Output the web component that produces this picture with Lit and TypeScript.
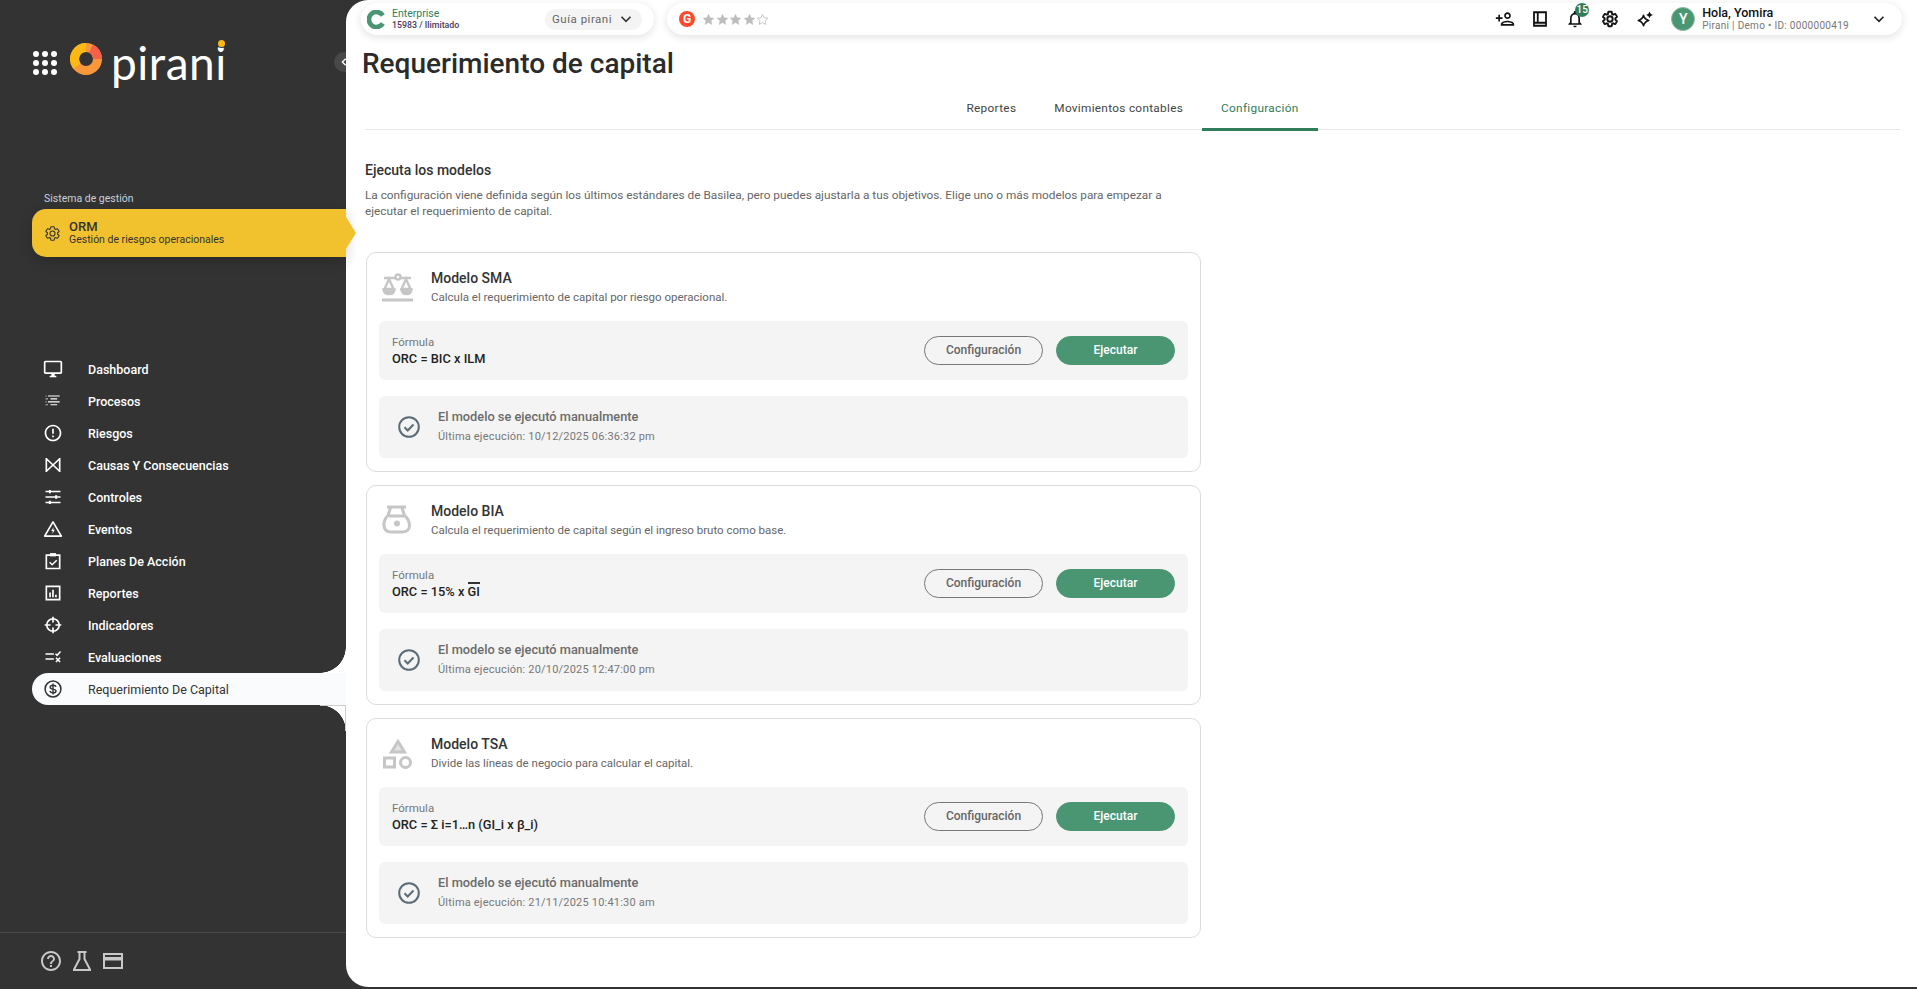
import { LitElement, css, html, svg } from "lit";
import { customElement } from "lit/decorators.js";

const navIcons: Record<string, unknown> = {
  monitor: svg`<path fill="currentColor" d="M21 2H3c-1.1 0-2 .9-2 2v12c0 1.1.9 2 2 2h7v2H8v2h8v-2h-2v-2h7c1.1 0 2-.9 2-2V4c0-1.1-.9-2-2-2zm0 14H3V4h18v12z"/>`,
  process: svg`<path fill="none" stroke="currentColor" stroke-width="1.4" d="M6 6h14M9 9.5h8M6 13h14M9 16.5h8"/><path fill="none" stroke="currentColor" stroke-width="1.4" d="M3 6h1.5M3 9.5h3M3 13h1.5M3 16.5h3" opacity=".6"/>`,
  alert: svg`<path fill="currentColor" d="M11 15h2v2h-2zm0-8h2v6h-2zm.99-5C6.47 2 2 6.48 2 12s4.47 10 9.99 10C17.52 22 22 17.52 22 12S17.52 2 11.99 2zM12 20c-4.42 0-8-3.58-8-8s3.58-8 8-8 8 3.58 8 8-3.58 8-8 8z"/>`,
  bowtie: svg`<path fill="none" stroke="currentColor" stroke-width="2" d="M4 3.5v17M20 3.5v17M4 4.5 20 19.5M20 4.5 4 19.5"/>`,
  tune: svg`<path fill="none" stroke="currentColor" stroke-width="1.8" d="M3 5.5h18M3 12h18M3 18.500h18"/><path fill="currentColor" d="M7 3.500h2.500v4H7zM14.500 10h2.500v4h-2.500zM7 16.500h2.500v4H7z"/>`,
  event: svg`<path fill="none" stroke="currentColor" stroke-width="2" stroke-linejoin="round" d="M12 3.500 22 20.500H2z"/><path fill="currentColor" d="M12.800 9.500 9.800 14.500h2l-.6 3.500 3-5h-2z"/>`,
  plan: svg`<path fill="none" stroke="currentColor" stroke-width="2" d="M4 5h16v16H4z"/><path fill="currentColor" d="M8.500 2.500h7v4h-7z"/><path fill="none" stroke="currentColor" stroke-width="1.800" d="m8 13.500 3 3 5.500-5.500"/>`,
  report: svg`<path fill="none" stroke="currentColor" stroke-width="2" d="M4 4h16v16H4z"/><path fill="currentColor" d="M7.500 11.500h2V17h-2zM11 8h2v9h-2zM14.500 14h2v3h-2z"/>`,
  target: svg`<circle cx="12" cy="12" r="7.500" fill="none" stroke="currentColor" stroke-width="2"/><path fill="none" stroke="currentColor" stroke-width="2" d="M12 2v7M12 15v7M2 12h7M15 12h7"/>`,
  evaluate: svg`<path fill="none" stroke="currentColor" stroke-width="1.800" d="M3 8.500h10M3 14.500h10M15 8l2 2 4-4.500M15.500 13l5 5M20.500 13l-5 5"/>`,
  dollar: svg`<circle cx="12" cy="12" r="9.500" fill="none" stroke="currentColor" stroke-width="1.800"/><path fill="none" stroke="currentColor" stroke-width="1.700" d="M15.500 9.500c-.3-1.400-1.700-2-3.500-2-1.900 0-3.400.9-3.400 2.300 0 3.300 7 1.500 7 4.600 0 1.400-1.500 2.200-3.600 2.200-1.900 0-3.400-.8-3.700-2.300M12 5.500v13"/>`,
};

const navItems = [
  { label: "Dashboard", icon: "monitor" },
  { label: "Procesos", icon: "process" },
  { label: "Riesgos", icon: "alert" },
  { label: "Causas Y Consecuencias", icon: "bowtie" },
  { label: "Controles", icon: "tune" },
  { label: "Eventos", icon: "event" },
  { label: "Planes De Acción", icon: "plan" },
  { label: "Reportes", icon: "report" },
  { label: "Indicadores", icon: "target" },
  { label: "Evaluaciones", icon: "evaluate" },
  { label: "Requerimiento De Capital", icon: "dollar", active: true },
];

const modelIcons: Record<string, unknown> = {
  scale: svg`<g fill="none" stroke="#c6c6c6" stroke-width="2.400"><path d="M3 7h12M19 7h11"/><circle cx="17" cy="6" r="2.500"/><path d="M8 8 3.500 18h9zM25 8l-4.500 10h9z"/><path d="M2.500 18.500c.5 3.500 2.500 4.500 5.500 4.500s5-1 5.500-4.500zM20.500 18.500c.5 3.500 2.500 4.500 5 4.500s4.500-1 5-4.500z" fill="#c6c6c6"/></g><path d="M1 27.500h31v3H1z" fill="#c6c6c6"/>`,
  bag: svg`<g fill="none" stroke="#c6c6c6" stroke-width="3"><path d="M6 3h19M9.500 4 7 11.500C3.500 15 2.500 18 3 22c.5 4 3.500 6 7 6h11c4.500 0 7.500-2.500 7.500-6.500 0-4-1.500-7-5-10L21 4M8 12h15"/></g><circle cx="16" cy="19.500" r="3" fill="#c6c6c6"/>`,
  shapes: svg`<g fill="none" stroke="#c6c6c6" stroke-width="3"><path d="M17 4.500 23.500 15h-13z" fill="#c6c6c6" fill-opacity=".5"/><path d="M3.500 21h10v9h-10z"/><circle cx="24.500" cy="25.500" r="5"/></g>`,
};

const models = [
  {
    name: "Modelo SMA",
    icon: "scale",
    desc: "Calcula el requerimiento de capital por riesgo operacional.",
    formula: html`ORC = BIC x ILM`,
    last: "Última ejecución: 10/12/2025 06:36:32 pm",
  },
  {
    name: "Modelo BIA",
    icon: "bag",
    desc: "Calcula el requerimiento de capital según el ingreso bruto como base.",
    formula: html`ORC = 15% x <span class="over">GI</span>`,
    last: "Última ejecución: 20/10/2025 12:47:00 pm",
  },
  {
    name: "Modelo TSA",
    icon: "shapes",
    desc: "Divide las líneas de negocio para calcular el capital.",
    formula: html`ORC = Σ i=1…n (GI_i x β_i)`,
    last: "Última ejecución: 21/11/2025 10:41:30 am",
  },
];

const chevron = html`<svg viewBox="0 0 24 24" width="18" height="18"><path fill="none" stroke="currentColor" stroke-width="2.200" d="m6 9 6 6 6-6"/></svg>`;
const star = (filled: boolean) =>
  html`<svg viewBox="0 0 24 24" width="13" height="13"><path fill=${filled ? "#bdbdbd" : "none"} stroke="#bdbdbd" stroke-width=${filled ? 1 : 1.5} d="m12 2.500 2.900 6.300 6.900.8-5.100 4.700 1.400 6.800-6.100-3.400-6.100 3.400 1.400-6.800L2.200 9.600l6.900-.8z"/></svg>`;

@customElement("app-root")
export class AppRoot extends LitElement {
  static styles = css`
    :host {
      display: flex;
      width: 1917px;
      height: 989px;
      overflow: hidden;
      background: #333333;
      font-family: Roboto, "Liberation Sans", sans-serif;
      color: #333;
    }

    /* sidebar */
    .side {
      width: 346px;
      flex: none;
      position: relative;
      z-index: 2;
      display: flex;
      flex-direction: column;
      color: #fff;
    }
    .logo {
      height: 189px;
      padding: 40px 0 0 33px;
      box-sizing: border-box;
      display: flex;
      align-items: flex-start;
    }
    .dots {
      display: grid;
      grid-template-columns: repeat(3, 6px);
      gap: 3px;
      margin-top: 11px;
    }
    .dots i {
      width: 6px;
      height: 6px;
      border-radius: 50%;
      background: #fff;
    }
    .ring {
      margin: 2px 0 0 12px;
    }
    .word {
      position: relative;
      margin-left: 8px;
      font-family: Lato, sans-serif;
      font-size: 46px;
      line-height: 46px;
      letter-spacing: 0.5px;
      font-weight: 400;
      color: #fff;
    }
    .word::after {
      content: "";
      position: absolute;
      right: 2px;
      top: 0;
      width: 7px;
      height: 7px;
      border-radius: 50%;
      background: #fdb913;
      box-shadow: 0 0 0 1px #333;
    }
    .sys {
      font-size: 10.5px;
      line-height: 20px;
      padding-left: 44px;
      color: #c9d1d9;
    }
    .orm {
      position: relative;
      margin-left: 32px;
      height: 48px;
      background: #f2c12e;
      border-radius: 14px 0 0 14px;
      display: flex;
      align-items: center;
      color: #333;
      box-shadow: 0 4px 14px rgba(0, 0, 0, 0.2);
    }
    .orm::after {
      content: "";
      position: absolute;
      right: -10px;
      top: 8px;
      width: 10px;
      height: 32px;
      background: #f2c12e;
      clip-path: polygon(0 0, 100% 50%, 0 100%);
    }
    .orm svg {
      margin: 0 8px 0 12px;
    }
    .orm b {
      display: block;
      font-size: 13px;
      font-weight: 500;
      line-height: 14px;
    }
    .orm span {
      display: block;
      font-size: 10.5px;
      line-height: 12px;
    }
    .nav {
      margin-top: 96px;
    }
    .row {
      position: relative;
      height: 32px;
      margin-left: 32px;
      display: flex;
      align-items: center;
      font-size: 12.500px;
      font-weight: 500;
    }
    .row svg {
      width: 20px;
      height: 20px;
      margin: 0 25px 0 11px;
      flex: none;
    }
    .row.active {
      background: #fafbfd;
      color: #333;
      font-weight: 400;
      border-radius: 16px 0 0 16px;
    }
    .row.active::before,
    .row.active::after {
      content: "";
      position: absolute;
      right: 0;
      width: 26px;
      height: 26px;
      box-sizing: border-box;
    }
    .row.active::before {
      top: -26px;
      background: radial-gradient(circle at 0 0, #333 25.500px, #fff 26px);
    }
    .row.active::after {
      bottom: -26px;
      background: radial-gradient(circle at 0 100%, #333 25.500px, #fff 26px);
      border-top: 1px solid #ccc;
      border-right: 1px solid #ccc;
    }
    .foot {
      margin-top: auto;
      height: 56px;
      border-top: 1px solid #4a4a4a;
      display: flex;
      align-items: center;
      gap: 7px;
      padding: 0 0 0 39px;
      color: #c8c8c8;
    }
    .toggle {
      position: absolute;
      top: 52px;
      right: 0;
      width: 12px;
      height: 20px;
      background: #484848;
      border-radius: 10px 0 0 10px;
    }
    .toggle svg {
      position: absolute;
      left: 6px;
      top: 3px;
      color: #fff;
    }

    /* main */
    .main {
      flex: 1;
      min-width: 0;
      height: 987px;
      background: #fff;
      border-radius: 22px 0 0 22px;
      display: flex;
      flex-direction: column;
      color: #333;
    }
    .top {
      display: flex;
      gap: 13px;
      padding: 3px 15px 0;
      height: 32px;
    }
    .pill {
      background: #fff;
      border-radius: 16px;
      height: 32px;
      box-shadow: 0 2px 8px rgba(0, 0, 0, 0.12);
      display: flex;
      align-items: center;
    }
    .plan {
      width: 293px;
      flex: none;
      padding-left: 6px;
      box-sizing: border-box;
    }
    .plan-text {
      margin-left: 6px;
    }
    .plan-text b {
      display: block;
      font-weight: 400;
      font-size: 10.500px;
      line-height: 12px;
      color: #2f7d5b;
    }
    .plan-text span {
      display: block;
      font-weight: 500;
      font-size: 8.800px;
      line-height: 10px;
      color: #4a3a5c;
    }
    .guide {
      margin-left: auto;
      margin-right: 12px;
      width: 97px;
      height: 21px;
      box-sizing: border-box;
      background: #f4f4f4;
      border-radius: 11px;
      display: flex;
      align-items: center;
      justify-content: space-between;
      padding: 0 7px 0 7px;
      font-size: 11.500px;
      letter-spacing: 0.5px;
      color: #666;
    }
    .guide svg {
      color: #333;
    }
    .bar {
      flex: 1;
      padding-left: 12px;
    }
    .g2 {
      width: 16px;
      height: 16px;
      border-radius: 50%;
      background: #ff492c;
      color: #fff;
      font-size: 12px;
      font-weight: 700;
      line-height: 16px;
      text-align: center;
      margin-right: 7px;
    }
    .stars {
      display: flex;
      gap: 0.500px;
    }
    .tools {
      margin-left: auto;
      display: flex;
      align-items: center;
      color: #111;
    }
    .tool {
      position: relative;
      width: 35px;
      display: flex;
      justify-content: center;
    }
    .badge {
      position: absolute;
      left: 18px;
      top: -6px;
      width: 14px;
      height: 14px;
      border-radius: 50%;
      background: #2f7d5b;
      color: #fff;
      font-size: 10px;
      font-weight: 500;
      line-height: 14px;
      text-align: center;
    }
    .avatar {
      width: 24px;
      height: 24px;
      box-sizing: border-box;
      border-radius: 50%;
      background: #4a9672;
      border: 1px solid #8dbba4;
      color: #fff;
      font-size: 14px;
      font-weight: 500;
      line-height: 22px;
      text-align: center;
      margin: 0 7px 0 9px;
    }
    .user b {
      display: block;
      font-size: 12.500px;
      font-weight: 500;
      line-height: 14px;
      color: #111;
    }
    .user span {
      display: block;
      font-size: 10px;
      letter-spacing: 0.300px;
      line-height: 12px;
      color: #777;
    }
    .caret {
      margin: 0 14px 0 21px;
      display: flex;
      color: #222;
    }
    h1 {
      margin: 10px 0 0 16px;
      font-size: 28px;
      line-height: 38px;
      font-weight: 500;
      color: #2b2b2b;
    }
    .tabs {
      margin: 5px 17px 0 19px;
      height: 41px;
      display: flex;
      justify-content: center;
      border-bottom: 1px solid #e6e6e6;
    }
    .tab {
      padding: 0 19px;
      font-size: 11.800px;
      letter-spacing: 0.300px;
      line-height: 41px;
      color: #444;
    }
    .tab.on {
      color: #2f7d5b;
      height: 40px;
      border-bottom: 3px solid #2f7d5b;
    }
    .body {
      width: 835px;
      margin: 30px 0 0 20px;
    }
    h2 {
      margin: 0 0 0 -1px;
      font-size: 14px;
      line-height: 20px;
      font-weight: 500;
      color: #333;
    }
    .intro {
      margin: 7px 0 33px -1px;
      font-size: 11.800px;
      line-height: 16px;
      color: #666;
    }
    .card {
      box-sizing: border-box;
      height: 220px;
      margin-bottom: 13px;
      padding: 0 12px;
      border: 1px solid #dcdcdc;
      border-radius: 10px;
    }
    .head {
      height: 68px;
      display: flex;
      align-items: center;
    }
    .head svg {
      margin: 0 17px 0 2px;
      flex: none;
    }
    .head b {
      display: block;
      font-size: 14px;
      font-weight: 500;
      line-height: 20px;
      color: #333;
    }
    .head span {
      display: block;
      font-size: 11.500px;
      line-height: 18px;
      color: #666;
    }
    .formula,
    .status {
      background: #f4f4f4;
      border-radius: 6px;
      display: flex;
      align-items: center;
    }
    .formula {
      height: 59px;
      padding: 0 13px;
      margin-bottom: 16px;
    }
    .formula small {
      display: block;
      font-size: 11.500px;
      line-height: 15px;
      color: #777;
    }
    .formula b {
      display: block;
      font-size: 12.800px;
      font-weight: 500;
      line-height: 17px;
      color: #222;
    }
    .over {
      border-top: 2px solid #333;
    }
    .btn {
      box-sizing: border-box;
      width: 119px;
      height: 29px;
      border-radius: 15px;
      font-size: 12px;
      font-weight: 500;
      line-height: 27px;
      text-align: center;
      border: 1px solid #777;
      color: #666;
    }
    .btn.first {
      margin-left: auto;
      margin-right: 13px;
    }
    .btn.run {
      background: #4a9672;
      border-color: #4a9672;
      color: #fff;
    }
    .status {
      height: 62px;
      padding-left: 18px;
    }
    .status svg {
      margin-right: 17px;
      flex: none;
    }
    .status b {
      display: block;
      font-size: 12.800px;
      font-weight: 500;
      line-height: 20px;
      color: #6b6b6b;
    }
    .status span {
      display: block;
      font-size: 11px;
      line-height: 20px;
      letter-spacing: 0.200px;
      color: #777;
    }
  `;

  renderCard(m: (typeof models)[number]) {
    return html`<section class="card">
      <div class="head">
        <svg viewBox="0 0 33 33" width="33" height="33">${modelIcons[m.icon]}</svg>
        <div><b>${m.name}</b><span>${m.desc}</span></div>
      </div>
      <div class="formula">
        <div><small>Fórmula</small><b>${m.formula}</b></div>
        <div class="btn first">Configuración</div>
        <div class="btn run">Ejecutar</div>
      </div>
      <div class="status">
        <svg viewBox="0 0 24 24" width="24" height="24">
          <circle cx="12" cy="12" r="9.800" fill="none" stroke="#5c6b75" stroke-width="2" />
          <path d="m7.500 12.300 3.200 3.200 5.800-6" fill="none" stroke="#5c6b75" stroke-width="2" />
        </svg>
        <div><b>El modelo se ejecutó manualmente</b><span>${m.last}</span></div>
      </div>
    </section>`;
  }

  render() {
    return html`
      <aside class="side">
        <div class="logo">
          <div class="dots">${Array.from({ length: 9 }, () => html`<i></i>`)}</div>
          <svg class="ring" viewBox="0 0 34 34" width="34" height="34">
            <circle cx="17" cy="17" r="11.500" fill="none" stroke="#f9983a" stroke-width="9" />
            <path d="M17 5.500A11.500 11.500 0 0 0 8 24" fill="none" stroke="#fdb913" stroke-width="9" />
            <path d="M22 6.500A11.500 11.500 0 0 1 28.500 17" fill="none" stroke="#f4604a" stroke-width="9" />
          </svg>
          <span class="word">pirani</span>
        </div>
        <div class="sys">Sistema de gestión</div>
        <div class="orm">
          <svg viewBox="0 0 24 24" width="17" height="17">
            <path fill="none" stroke="#333" stroke-width="1.500" d="M19.140 12.940c.04-.3.06-.61.06-.94 0-.32-.02-.64-.07-.94l2.030-1.580c.18-.14.23-.41.12-.61l-1.920-3.320c-.12-.22-.37-.29-.59-.22l-2.390.96c-.5-.38-1.030-.7-1.620-.94l-.36-2.540c-.04-.24-.24-.41-.48-.41h-3.840c-.24 0-.43.17-.47.41l-.36 2.540c-.59.24-1.130.57-1.620.94l-2.390-.96c-.22-.08-.47 0-.59.22L2.740 8.870c-.12.21-.08.47.12.61l2.030 1.580c-.05.3-.09.63-.09.94s.02.64.07.94l-2.030 1.580c-.18.14-.23.41-.12.61l1.920 3.320c.12.22.37.29.59.22l2.390-.96c.5.38 1.030.7 1.620.94l.36 2.540c.05.24.24.41.48.41h3.840c.24 0 .44-.17.47-.41l.36-2.540c.59-.24 1.130-.56 1.620-.94l2.390.96c.22.08.47 0 .59-.22l1.920-3.320c.12-.22.07-.47-.12-.61l-2.010-1.580zM12 15.600c-1.980 0-3.600-1.620-3.600-3.600s1.620-3.600 3.600-3.600 3.600 1.620 3.600 3.600-1.620 3.600-3.600 3.600z" />
          </svg>
          <div><b>ORM</b><span>Gestión de riesgos operacionales</span></div>
        </div>
        <nav class="nav">
          ${navItems.map(
            (n) => html`<div class="row ${n.active ? "active" : ""}">
              <svg viewBox="0 0 24 24">${navIcons[n.icon]}</svg>${n.label}
            </div>`,
          )}
        </nav>
        <div class="foot">
          <svg viewBox="0 0 24 24" width="24" height="24"><path fill="currentColor" d="M11 18h2v-2h-2v2zm1-16C6.480 2 2 6.480 2 12s4.480 10 10 10 10-4.480 10-10S17.520 2 12 2zm0 18c-4.410 0-8-3.590-8-8s3.590-8 8-8 8 3.590 8 8-3.590 8-8 8zm0-14c-2.210 0-4 1.790-4 4h2c0-1.100.9-2 2-2s2 .9 2 2c0 2-3 1.750-3 5h2c0-2.250 3-2.500 3-5 0-2.210-1.790-4-4-4z"/></svg>
          <svg viewBox="0 0 24 24" width="24" height="24"><path fill="none" stroke="currentColor" stroke-width="2" d="M7.500 3h9M9.500 3v7L4 20.500V21h16v-.5L14.500 10V3"/></svg>
          <svg viewBox="0 0 24 24" width="24" height="24"><path fill="none" stroke="currentColor" stroke-width="2" d="M3 5h18v14H3z"/><path fill="currentColor" d="M3 8h18v3.500H3z"/></svg>
        </div>
        <div class="toggle">
          <svg viewBox="0 0 24 24" width="8" height="14"><path fill="none" stroke="currentColor" stroke-width="4" d="M17 2 7 12l10 10"/></svg>
        </div>
      </aside>
      <main class="main">
        <div class="top">
          <div class="pill plan">
            <svg viewBox="0 0 24 24" width="19" height="19"><path fill="none" stroke="#4a9672" stroke-width="6" d="M20 7A9.500 9.500 0 1 0 20 17"/></svg>
            <div class="plan-text"><b>Enterprise</b><span>15983 / Ilimitado</span></div>
            <div class="guide">Guía pirani ${chevron}</div>
          </div>
          <div class="pill bar">
            <div class="g2">G</div>
            <div class="stars">${[1, 1, 1, 1, 0].map((s) => star(!!s))}</div>
            <div class="tools">
              <div class="tool"><svg viewBox="0 0 24 24" width="20" height="20"><path fill="currentColor" d="M15 12c2.210 0 4-1.790 4-4s-1.790-4-4-4-4 1.790-4 4 1.790 4 4 4zm0-6c1.100 0 2 .9 2 2s-.9 2-2 2-2-.9-2-2 .9-2 2-2zm0 8c-2.670 0-8 1.340-8 4v2h16v-2c0-2.660-5.330-4-8-4zm-6 4c.22-.72 3.310-2 6-2 2.700 0 5.800 1.290 6 2H9zm-3-3v-3h3v-2H6V7H4v3H1v2h3v3h2z"/></svg></div>
              <div class="tool"><svg viewBox="0 0 24 24" width="18" height="18"><path fill="none" stroke="currentColor" stroke-width="2.400" d="M4 3h16v18H4zM9 3v13.500M4 17h16"/></svg></div>
              <div class="tool"><svg viewBox="0 0 24 24" width="20" height="20"><path fill="currentColor" d="M12 22c1.100 0 2-.9 2-2h-4c0 1.100.9 2 2 2zm6-6v-5c0-3.070-1.630-5.640-4.500-6.320V4c0-.83-.67-1.500-1.500-1.500s-1.500.67-1.500 1.500v.68C7.640 5.360 6 7.920 6 11v5l-2 2v1h16v-1l-2-2zm-2 1H8v-6c0-2.480 1.510-4.500 4-4.500s4 2.020 4 4.500v6z"/></svg><span class="badge">15</span></div>
              <div class="tool"><svg viewBox="0 0 24 24" width="18" height="18"><path fill="none" stroke="currentColor" stroke-width="2.500" d="M19.140 12.940c.04-.3.06-.61.06-.94 0-.32-.02-.64-.07-.94l2.030-1.580c.18-.14.23-.41.12-.61l-1.920-3.320c-.12-.22-.37-.29-.59-.22l-2.390.96c-.5-.38-1.030-.7-1.620-.94l-.36-2.540c-.04-.24-.24-.41-.48-.41h-3.840c-.24 0-.43.17-.47.41l-.36 2.540c-.59.24-1.130.57-1.620.94l-2.390-.96c-.22-.08-.47 0-.59.22L2.740 8.870c-.12.21-.08.47.12.61l2.030 1.580c-.05.3-.09.63-.09.94s.02.64.07.94l-2.030 1.580c-.18.14-.23.41-.12.61l1.920 3.320c.12.22.37.29.59.22l2.390-.96c.5.38 1.030.7 1.620.94l.36 2.540c.05.24.24.41.48.41h3.840c.24 0 .44-.17.47-.41l.36-2.540c.59-.24 1.130-.56 1.620-.94l2.390.96c.22.08.47 0 .59-.22l1.920-3.320c.12-.22.07-.47-.12-.61l-2.010-1.580zM12 15.600c-1.980 0-3.600-1.620-3.600-3.600s1.620-3.600 3.600-3.600 3.600 1.620 3.600 3.600-1.620 3.600-3.600 3.600z"/></svg></div>
              <div class="tool"><svg viewBox="0 0 24 24" width="18" height="18"><path fill="none" stroke="currentColor" stroke-width="2" stroke-linejoin="round" d="M10 7c1 4 3 6 7 7-4 1-6 3-7 7-1-4-3-6-7-7 4-1 6-3 7-7z"/><path fill="currentColor" d="m18 2 1.500 3 3 1.500-3 1.500-1.500 3-1.500-3-3-1.500 3-1.500z"/></svg></div>
              <div class="avatar">Y</div>
              <div class="user"><b>Hola, Yomira</b><span>Pirani | Demo • ID: 0000000419</span></div>
              <div class="caret">${chevron}</div>
            </div>
          </div>
        </div>
        <h1>Requerimiento de capital</h1>
        <div class="tabs">
          <div class="tab">Reportes</div>
          <div class="tab">Movimientos contables</div>
          <div class="tab on">Configuración</div>
        </div>
        <div class="body">
          <h2>Ejecuta los modelos</h2>
          <p class="intro">La configuración viene definida según los últimos estándares de Basilea, pero puedes ajustarla a tus objetivos. Elige uno o más modelos para empezar a ejecutar el requerimiento de capital.</p>
          ${models.map((m) => this.renderCard(m))}
        </div>
      </main>
    `;
  }
}
